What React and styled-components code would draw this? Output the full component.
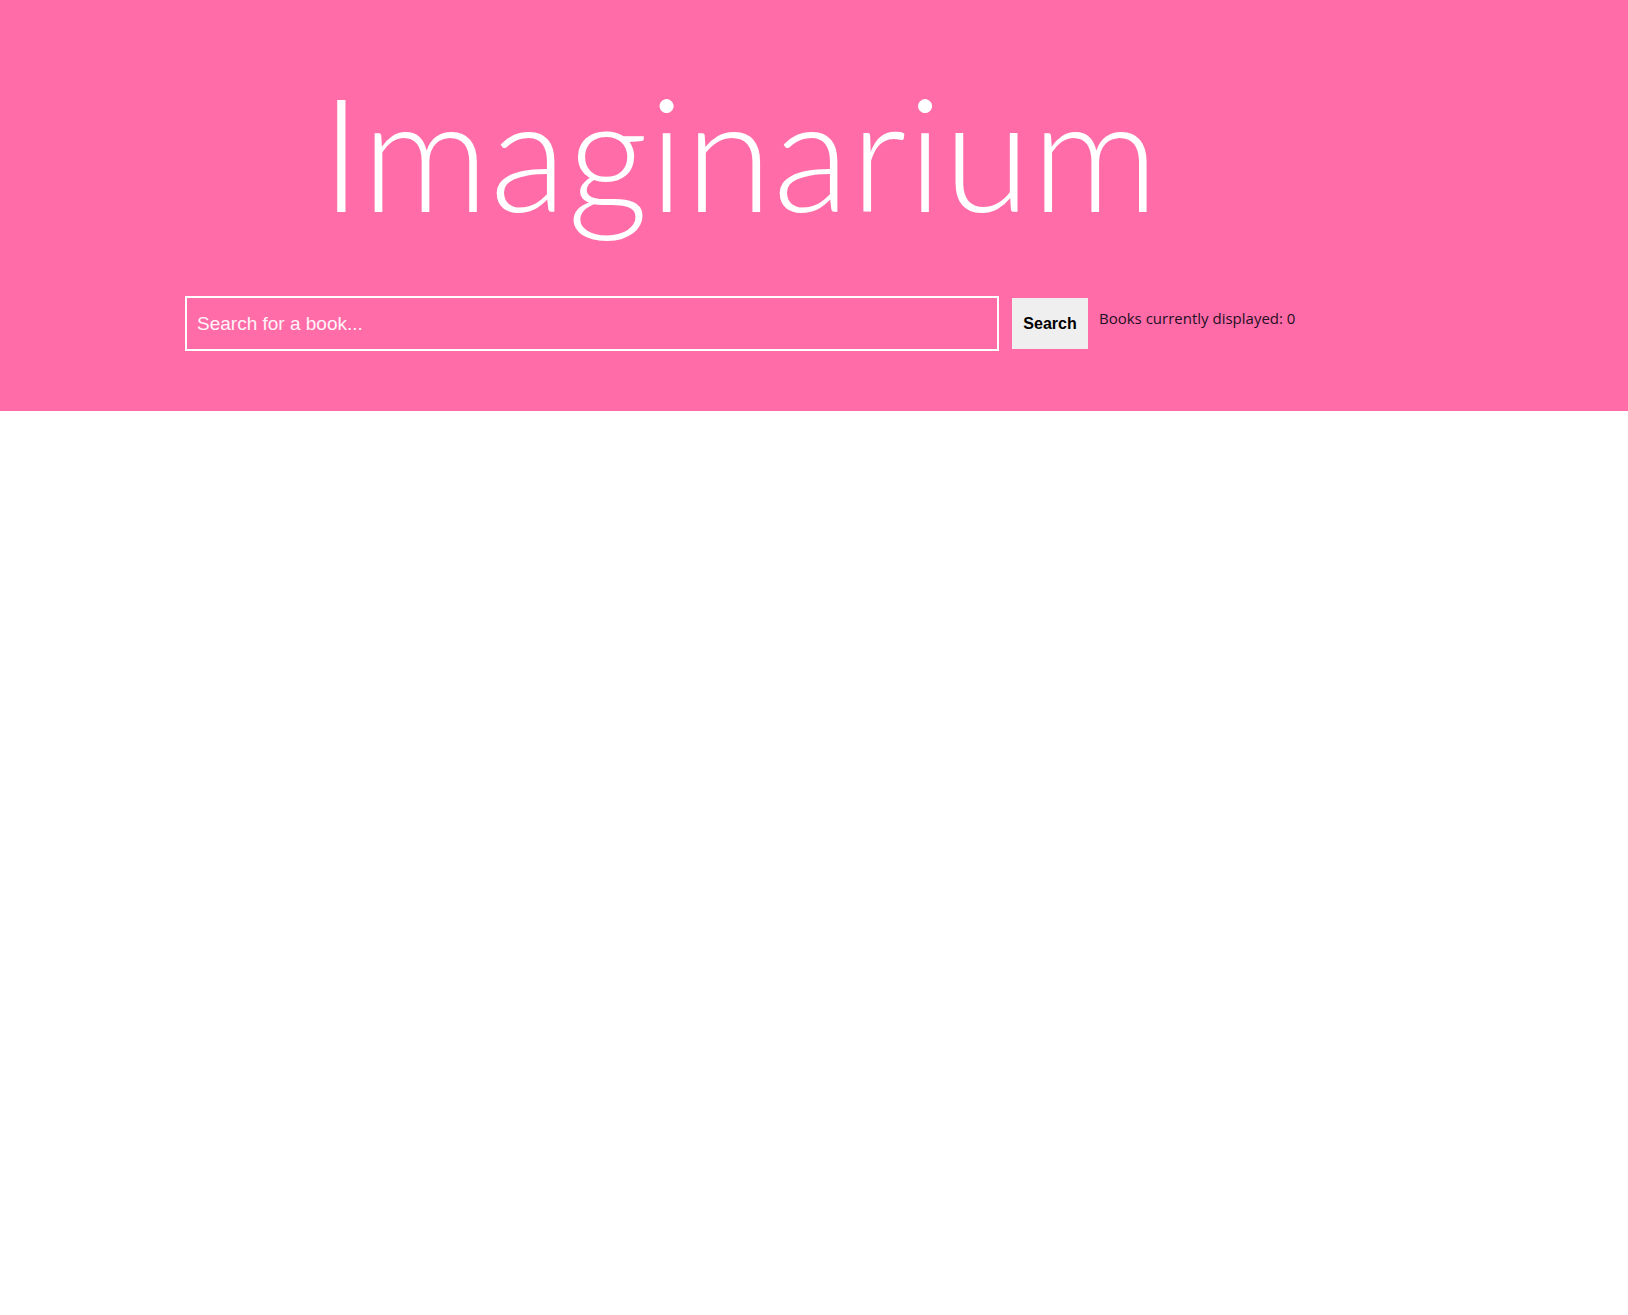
import React from "react";
import styled, { createGlobalStyle } from "styled-components";

const GlobalStyle = createGlobalStyle`
  html, body {
    margin: 0;
    padding: 0;
    background: #ffffff;
    font-family: "Segoe UI", "Open Sans", "Liberation Sans", sans-serif;
  }
`;

function App() {
  const books = [];

  return (
    <>
      <GlobalStyle />
      <Header>
        <Inner>
          <Title>Imaginarium</Title>
          <SearchRow>
            <SearchInput type="text" placeholder="Search for a book..." />
            <SearchButton type="button">Search</SearchButton>
            <Counter>Books currently displayed: {books.length}</Counter>
          </SearchRow>
        </Inner>
      </Header>
    </>
  );
}

export default App;

const Header = styled.header`
  background: #ff6ca8;
  height: 411px;
  padding-left: 185px;
  box-sizing: border-box;
`;

const Inner = styled.div`
  display: inline-flex;
  flex-direction: column;
  align-items: center;
`;

const Title = styled.h1`
  margin: 0;
  padding-top: 56px;
  font-family: Lato, "Open Sans", sans-serif;
  font-weight: 300;
  font-size: 158px;
  line-height: 190px;
  letter-spacing: 1px;
  color: #ffffff;
`;

const SearchRow = styled.div`
  display: flex;
  align-items: flex-start;
  margin-top: 50px;
`;

const SearchInput = styled.input`
  width: 814px;
  height: 55px;
  box-sizing: border-box;
  border: 2px solid #ffffff;
  background: transparent;
  padding: 0 10px;
  font-family: "Liberation Sans", Arial, sans-serif;
  font-size: 19px;
  color: #ffffff;
  outline: none;

  &::placeholder {
    color: #fff4f8;
  }
`;

const SearchButton = styled.button`
  margin: 2px 0 0 13px;
  width: 76px;
  height: 51px;
  border: none;
  background: #efefef;
  font-family: "Liberation Sans", Arial, sans-serif;
  font-weight: 700;
  font-size: 16px;
  color: #000000;
  cursor: pointer;
`;

const Counter = styled.span`
  margin: 12px 0 0 11px;
  font-family: "Open Sans", sans-serif;
  font-size: 15px;
  line-height: 20px;
  color: #241024;
  white-space: nowrap;
`;
